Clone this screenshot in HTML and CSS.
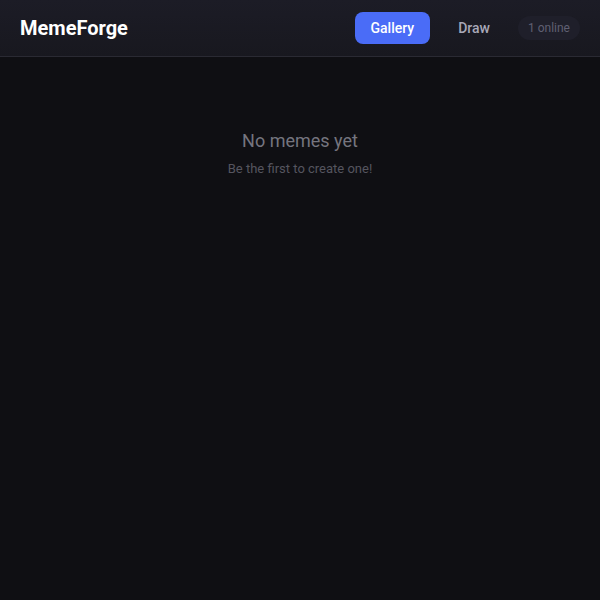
FILE: index.html
```html
<!DOCTYPE html>
<html lang="en">
<head>
    <meta charset="utf-8">
    <meta name="viewport" content="width=device-width, initial-scale=1.0">
    <title>MemeForge</title>
    <link rel="stylesheet" href="styles.css">
</head>
<body>
    <header class="header">
        <div class="header__logo">MemeForge</div>
        <nav class="header__nav">
            <button class="nav__btn nav__btn--active">Gallery</button>
            <button class="nav__btn">Draw</button>
            <span class="header__online">1 online</span>
        </nav>
    </header>
    <main class="gallery">
        <div class="gallery__empty">
            <h2 class="gallery__empty-title">No memes yet</h2>
            <p class="gallery__empty-text">Be the first to create one!</p>
        </div>
    </main>
</body>
</html>
```

FILE: styles.css
```css
body {
    --color-bg: #0f0f13;
    --color-header: #1a1a23;
    --color-border: #2a2a33;
    --color-primary: #4a6cf7;
    margin: 0;
    min-height: 100vh;
    background: var(--color-bg);
    color: #ffffff;
    font-family: Roboto, 'Noto Sans', sans-serif;
}

.header {
    height: 57px;
    box-sizing: border-box;
    display: flex;
    align-items: center;
    justify-content: space-between;
    padding: 0 20px;
    background: linear-gradient(180deg, #1c1c26, #18181f);
    border-bottom: 1px solid var(--color-border);
}

.header__logo {
    font-size: 20px;
    font-weight: 700;
    color: #ffffff;
}

.header__nav {
    display: flex;
    align-items: center;
    gap: 12px;
}

.nav__btn {
    height: 32px;
    padding: 0 16px;
    border: none;
    border-radius: 8px;
    background: transparent;
    color: #a8a8b8;
    font: 500 14px Roboto, sans-serif;
    cursor: pointer;
}

.nav__btn--active {
    background: var(--color-primary);
    color: #ffffff;
}

.header__online {
    padding: 5px 10px;
    border-radius: 999px;
    background: #1f1f2a;
    color: #5f5f72;
    font-size: 12px;
}

.gallery {
    padding: 73px 20px;
}

.gallery__empty {
    text-align: center;
}

.gallery__empty-title {
    margin: 0 0 10px;
    font-size: 18px;
    font-weight: 400;
    color: #75757f;
}

.gallery__empty-text {
    margin: 0;
    font-size: 13px;
    color: #55555f;
}
```
